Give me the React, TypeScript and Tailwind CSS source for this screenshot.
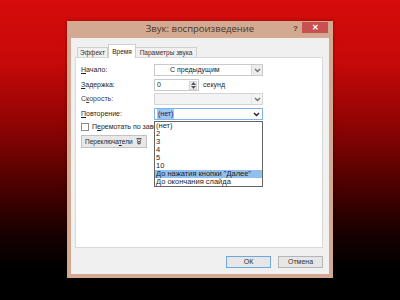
import type { ReactNode } from "react";

const ui = { fontFamily: '"Liberation Sans", Arial, sans-serif' };

function Chevron({ dark }: { dark?: boolean }) {
  return (
    <svg width="7" height="5" viewBox="0 0 7 5">
      <path d="M1 1 L3.5 3.5 L6 1" fill="none" stroke={dark ? "#1a1a1a" : "#6d6d6d"} strokeWidth="1.3" />
    </svg>
  );
}

function Combo({ children, disabled, focused }: { children?: ReactNode; disabled?: boolean; focused?: boolean }) {
  return (
    <div
      className={`flex h-[12px] w-[109px] items-stretch border ${
        disabled ? "border-[#d5d5d5] bg-[#f3f3f3]" : focused ? "border-[#7eb4ea] bg-white" : "border-[#c9c9c9] bg-white"
      }`}
    >
      <div className="flex flex-1 items-center overflow-hidden">{children}</div>
      <div
        className={`flex w-[11px] items-center justify-center ${
          focused ? "bg-white" : disabled ? "border-l border-[#e3e3e3] bg-[#f3f3f3]" : "border-l border-[#d4d4d4] bg-[#ececec]"
        }`}
      >
        <Chevron dark={focused} />
      </div>
    </div>
  );
}

const listItems = ["(нет)", "2", "3", "4", "5", "10", 'До нажатия кнопки "Далее"', "До окончания слайда"];

export default function App() {
  return (
    <div
      className="h-[300px] w-[400px] overflow-hidden bg-[linear-gradient(to_bottom,#d60b0b_0%,#c80909_20%,#940404_40%,#520101_60%,#180000_78%,#000000_90%)] pl-[67px] pt-[21px]"
      style={ui}
    >
      {/* Dialog */}
      <div className="flex h-[257px] w-[266px] flex-col bg-[#d3aa91] px-[4px] pb-[4px] shadow-[0_0_3px_rgba(0,0,0,0.4)]">
        {/* Title bar */}
        <div className="relative flex h-[17px] items-center justify-center">
          <span className="text-[9.5px] text-[#4b3426]" style={{ fontFamily: '"Open Sans", "Noto Sans", sans-serif' }}>
            Звук: воспроизведение
          </span>
          <span className="absolute left-[222px] top-[2px] text-[8px] font-bold text-[#5a4030]">?</span>
          <div className="absolute right-[1px] top-[1px] flex h-[11px] w-[26px] items-center justify-center bg-[#c85050] text-[8px] font-bold leading-none text-white">
            ✕
          </div>
        </div>

        {/* Client area */}
        <div className="flex flex-1 flex-col bg-[#f0f0f0] pl-[4px] pr-[6px] pt-[6px] text-[7px] text-[#1e1e1e]">
          {/* Tabs */}
          <div className="flex h-[13px] items-end whitespace-nowrap pl-[2px]">
            <div className="flex h-[10px] w-[31px] items-center justify-center border border-b-0 border-[#d0d0d0] bg-[#f0f0f0] text-[6.5px] text-[#333]">
              Эффект
            </div>
            <div className="relative z-10 -mb-px flex h-[14px] w-[28px] items-start justify-center border border-b-0 border-[#cfcfcf] bg-white pt-[2px] text-[6.5px]">
              Время
            </div>
            <div className="flex h-[10px] w-[61px] items-center justify-center border border-b-0 border-l-0 border-[#d0d0d0] bg-[#f0f0f0] text-[6.5px] text-[#333]">
              Параметры звука
            </div>
          </div>

          {/* Panel */}
          <div className="flex h-[191px] flex-col border border-[#d9d9d9] bg-white pl-[5px] pt-[6px]">
            <div className="flex h-[12px] items-center">
              <span className="w-[73px]">
                <u>Н</u>ачало:
              </span>
              <Combo>
                <span className="pl-[15px]">С предыдущим</span>
              </Combo>
            </div>

            <div className="mt-[3px] flex h-[12px] items-center">
              <span className="w-[73px]">
                <u>З</u>адержка:
              </span>
              <div className="flex h-[12px] w-[45px] items-center border border-[#c9c9c9] bg-white pl-[2px]">
                <span className="flex-1">0</span>
                <div className="mr-[1px] flex h-[9px] w-[8px] flex-col items-center justify-center gap-[1px] border border-[#d4d4d4] bg-[#ececec]">
                  <svg width="5" height="3" viewBox="0 0 5 3">
                    <path d="M0 3 L2.5 0 L5 3 Z" fill="#555" />
                  </svg>
                  <svg width="5" height="3" viewBox="0 0 5 3">
                    <path d="M0 0 L2.5 3 L5 0 Z" fill="#555" />
                  </svg>
                </div>
              </div>
              <span className="ml-[4px]">секунд</span>
            </div>

            <div className="mt-[2px] flex h-[12px] items-center">
              <span className="w-[73px] text-[#3a3a3a]">
                С<u>к</u>орость:
              </span>
              <Combo disabled />
            </div>

            <div className="mt-[3px] flex h-[12px] items-center">
              <span className="w-[73px]">
                <u>П</u>овторение:
              </span>
              <div className="relative">
                <Combo focused>
                  <span className="ml-[2px] bg-[#9fc6f0] px-[1px] text-[#10206a]">(нет)</span>
                </Combo>
                {/* Open list */}
                <div className="absolute left-0 top-[13px] z-20 flex w-[109px] flex-col border border-[#646464] bg-white text-[7.5px]">
                  {listItems.map((t, i) => (
                    <div
                      key={t}
                      className={`h-[8px] overflow-hidden whitespace-nowrap pl-[1px] leading-[8px] ${
                        i === 6 ? "bg-[#92c0ee]" : ""
                      }`}
                    >
                      {t}
                    </div>
                  ))}
                </div>
              </div>
            </div>

            <div className="mt-[3px] flex h-[8px] items-center">
              <div className="h-[8px] w-[8px] border border-[#8a8a8a] bg-white" />
              <span className="ml-[3px] w-[62px] overflow-hidden whitespace-nowrap">
                П<u>е</u>ремотать по завершении воспроизведения
              </span>
            </div>

            <div className="mt-[4px] flex">
              <div className="flex h-[13px] w-[66px] items-center justify-between whitespace-nowrap border border-[#c2c2c2] bg-[#e8e8e8] pl-[3px] pr-[4px] text-[6.5px]">
                <span>
                  Переключа<u>т</u>ели
                </span>
                <svg width="6" height="7" viewBox="0 0 6 7">
                  <path d="M0.5 0.8 H5.5" stroke="#222" strokeWidth="1" />
                  <path d="M1 2.5 L3 4.2 L5 2.5 M1 4.5 L3 6.2 L5 4.5" fill="none" stroke="#222" strokeWidth="1" />
                </svg>
              </div>
            </div>
          </div>

          {/* Buttons */}
          <div className="mt-[8px] flex justify-end gap-[7px]">
            <div className="flex h-[12px] w-[45px] items-center justify-center border border-[#6fa8dc] bg-[#e6e6e6] text-[#333]">
              ОК
            </div>
            <div className="flex h-[12px] w-[45px] items-center justify-center border border-[#b5b5b5] bg-[#e6e6e6] text-[#333]">
              Отмена
            </div>
          </div>
        </div>
      </div>
    </div>
  );
}
